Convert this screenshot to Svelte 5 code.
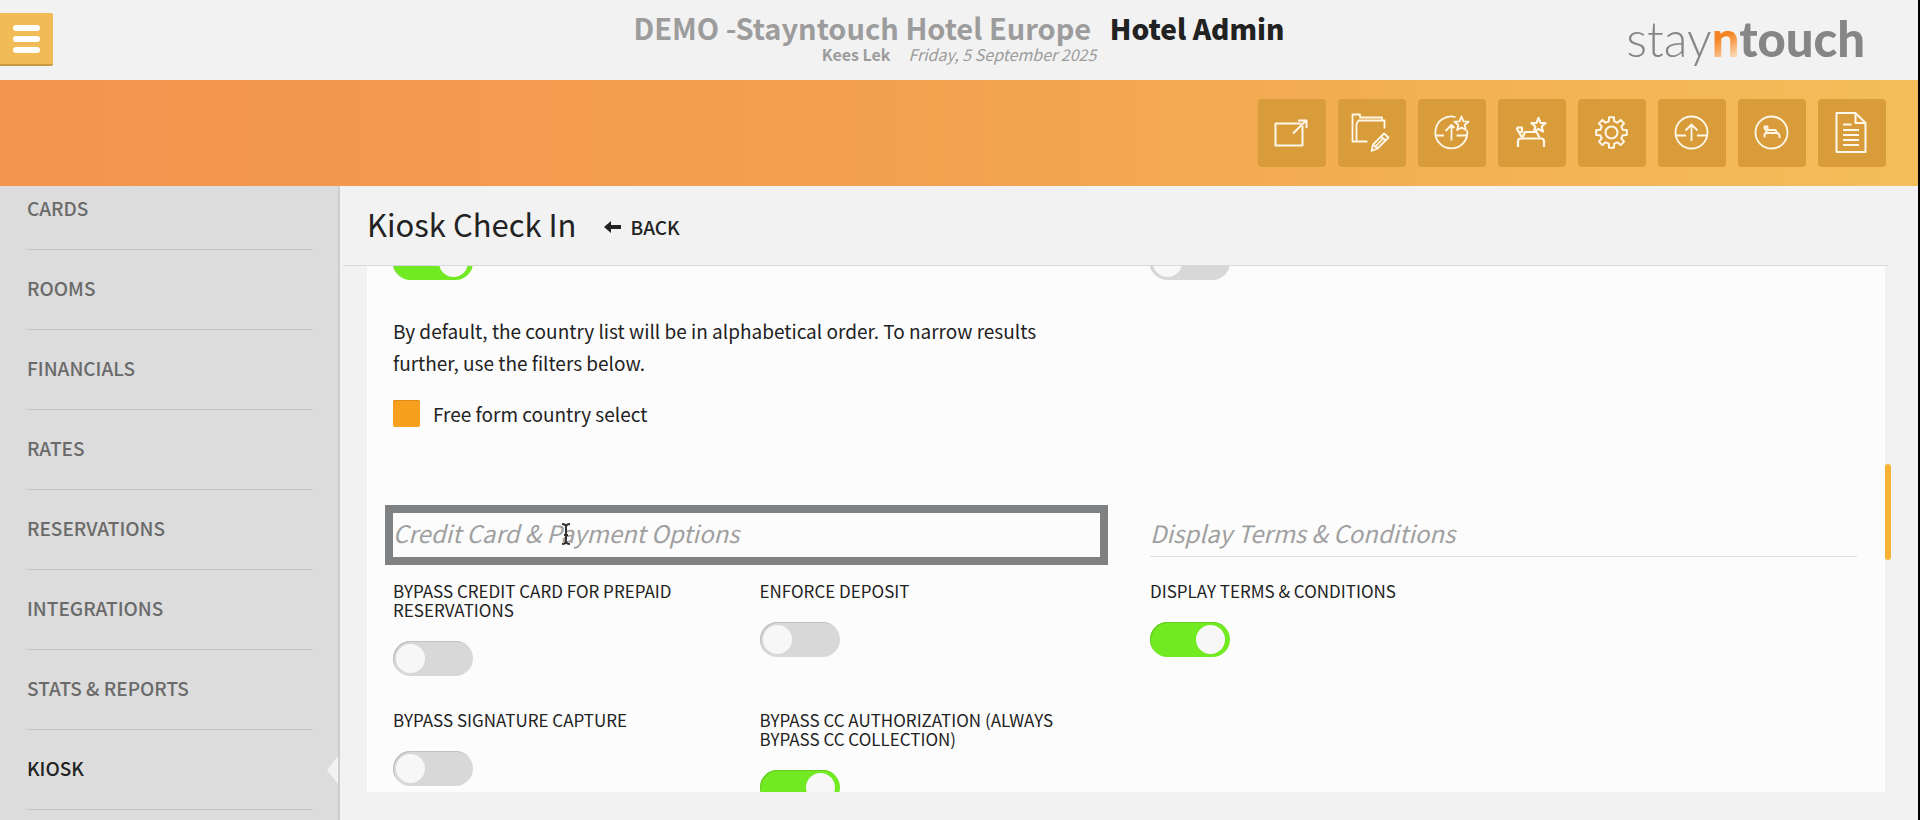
<script lang="ts">
  type MenuItem = { label: string; active?: boolean };

  const menu: MenuItem[] = [
    { label: 'CARDS' },
    { label: 'ROOMS' },
    { label: 'FINANCIALS' },
    { label: 'RATES' },
    { label: 'RESERVATIONS' },
    { label: 'INTEGRATIONS' },
    { label: 'STATS & REPORTS' },
    { label: 'KIOSK', active: true },
  ];

  const star = (cx: number, cy: number, r: number) => {
    let d = '';
    for (let i = 0; i < 10; i++) {
      const a = (Math.PI / 5) * i - Math.PI / 2;
      const rad = i % 2 ? r * 0.45 : r;
      d += `${i ? 'L' : 'M'}${(cx + rad * Math.cos(a)).toFixed(1)} ${(cy + rad * Math.sin(a)).toFixed(1)}`;
    }
    return d + 'Z';
  };

  // eight teeth, four points each
  const gear = (cx: number, cy: number, inner: number, outer: number) => {
    const pts: string[] = [];
    for (let i = 0; i < 8; i++) {
      const mid = (Math.PI / 4) * i;
      for (const [off, rad] of [[-0.24, inner], [-0.16, outer], [0.16, outer], [0.24, inner]]) {
        pts.push(`${(cx + rad * Math.cos(mid + off)).toFixed(1)} ${(cy + rad * Math.sin(mid + off)).toFixed(1)}`);
      }
    }
    return `M${pts.join('L')}Z`;
  };

  const ring = 'M17.5 33.5a16 16 0 1 0 32 0a16 16 0 1 0 -32 0Z';

  const tools = [
    { name: 'Open in new window', width: 2, paths: ['M43 24.5H17.5V46.5H44.5V27', 'M35 34.5L48 21.5', 'M40 21.5H48.5V29'] },
    {
      name: 'Edit folder',
      width: 1.8,
      paths: [
        'M29.5 42.5H14.5V15.5H22V18.5H44V21',
        'M18.5 42V25L20.5 21.5H46.5V29.5',
        'M33.5 52L35 45.5L46 34.5L50.5 38.5L39.5 49.5Z',
        'M35 45.5L39.5 49.5M43 37.5L47.5 41.5M37.5 47.5L45 39.5',
      ],
    },
    {
      name: 'Favourite check in',
      width: 1.8,
      paths: ['M37.5 18A16 16 0 1 0 49.2 31.5', 'M33.5 41.5V26M27.5 32L33.5 26L36.5 29', 'M18 36.5H26M38.5 36.5H49', star(43.5, 25, 7.5)],
    },
    {
      name: 'Favourite room',
      width: 2.2,
      paths: ['M20 48V42.5Q20 39.5 23 39.5H43Q46 39.5 46 42.5V48', 'M24.5 38.5L27 33H38.5L41.5 38.5', 'M18.5 29L24 38.5M19.5 32V28.5H24V33H20', star(40.5, 26.5, 7.5)],
    },
    { name: 'Settings', width: 2, paths: [gear(33.5, 33.5, 11.5, 15.5), 'M27.5 33.5a6 6 0 1 0 12 0a6 6 0 1 0 -12 0Z'] },
    { name: 'Check in', width: 1.8, paths: [ring, 'M33.5 42V25.5M27.5 31.5L33.5 25.5L39.5 31.5', 'M18 36.5H28M39 36.5H49'] },
    { name: 'Rooms', width: 1.8, paths: [ring, 'M26.5 38.5V36.5Q26.5 34 29 34H38.5Q41.5 34 41.5 37V39', 'M26.5 27.5L29 34M26.5 30.5L26.5 27.5H29.5V30.5M29 31H37.5L39 34'] },
    { name: 'Report', width: 2, paths: ['M18.5 14H37.5L47.5 24V53H18.5Z', 'M37.5 14V24H47.5', 'M25 25.5H33.5M25 31H41M25 36H41M25 41H41M25 46H41'] },
  ];

  let countryList = $state(true);
  let passport = $state(false);
  let freeForm = $state(true);
  let showTerms = $state(true);

  let payment = $state([
    { id: 'prepaid', label: 'BYPASS CREDIT CARD FOR PREPAID RESERVATIONS', on: false },
    { id: 'deposit', label: 'ENFORCE DEPOSIT', on: false },
    { id: 'signature', label: 'BYPASS SIGNATURE CAPTURE', on: false },
    { id: 'authorization', label: 'BYPASS CC AUTHORIZATION (ALWAYS BYPASS CC COLLECTION)', on: true },
  ]);
</script>

<div class="app">
  <header class="top">
    <button class="burger" aria-label="Menu"><span></span><span></span><span></span></button>
    <div class="hotel">
      <h1>DEMO -Stayntouch Hotel Europe <strong>Hotel Admin</strong></h1>
      <p><b>Kees Lek</b><i>Friday, 5 September 2025</i></p>
    </div>
    <div class="logo">stay<b><em>n</em>touch</b></div>
  </header>

  <nav class="toolbar" aria-label="Quick actions">
    {#each tools as tool}
      <button aria-label={tool.name}>
        <svg viewBox="0 0 68 68" stroke-width={tool.width}>
          {#each tool.paths as d}<path {d} />{/each}
        </svg>
      </button>
    {/each}
  </nav>

  <div class="body">
    <nav class="sidebar" aria-label="Admin sections">
      <ul>
        {#each menu as item}
          <li class:active={item.active}><a href="#admin">{item.label}</a></li>
        {/each}
      </ul>
    </nav>

    <main>
      <div class="page-head">
        <h2>Kiosk Check In</h2>
        <button class="back">
          <svg viewBox="0 0 18 12"><path d="M0 6L7 0V4H17V8H7V12Z" /></svg>
          BACK
        </button>
      </div>

      <div class="panel">
        <div class="scroller">
          <section class="columns country">
            <div>
              <input type="checkbox" class="switch" aria-label="Country selection" bind:checked={countryList} />
              <p>By default, the country list will be in alphabetical order. To narrow results further, use the filters below.</p>
              <label class="check"><input type="checkbox" bind:checked={freeForm} />Free form country select</label>
            </div>
            <div>
              <input type="checkbox" class="switch" aria-label="Passport entry" bind:checked={passport} />
            </div>
          </section>

          <section class="columns">
            <div>
              <h3 class="focused">
                Credit Card &amp; Payment Options
                <svg class="cursor" viewBox="0 0 10 22"><path d="M1 1Q5 1 5 4Q5 1 9 1M5 4V18M1 21Q5 21 5 18Q5 21 9 21M3 12H7" /></svg>
              </h3>
              <div class="options">
                {#each payment as option (option.id)}
                  <div class="option">
                    <label for={option.id}>{option.label}</label>
                    <input id={option.id} type="checkbox" class="switch" bind:checked={option.on} />
                  </div>
                {/each}
              </div>
            </div>
            <div>
              <h3>Display Terms &amp; Conditions</h3>
              <div class="options">
                <div class="option">
                  <label for="terms">DISPLAY TERMS &amp; CONDITIONS</label>
                  <input id="terms" type="checkbox" class="switch" bind:checked={showTerms} />
                </div>
              </div>
            </div>
          </section>
        </div>
        <div class="thumb"></div>
      </div>
    </main>
  </div>
</div>

<style>
  :global(body) {
    margin: 0;
    background: #000;
  }
  .app {
    display: flex;
    flex-direction: column;
    height: 100vh;
    margin-right: 2px;
    overflow: hidden;
    background: #f2f2f2;
    color: #222;
    font-family: "Source Sans Pro", "Noto Sans CJK SC", sans-serif;
    font-size: 19px;
  }
  h1, h2, h3, p, ul {
    margin: 0;
    padding: 0;
    font-weight: 400;
  }
  button {
    border: 0;
    padding: 0;
    font: inherit;
    color: inherit;
    cursor: pointer;
  }

  .top {
    display: grid;
    grid-template-columns: 1fr auto 1fr;
    flex: none;
    height: 80px;
  }
  .burger {
    display: flex;
    flex-direction: column;
    align-items: center;
    justify-content: center;
    gap: 5px;
    box-sizing: border-box;
    width: 53px;
    height: 53px;
    margin-top: 13px;
    border-bottom: 2px solid #c99a45;
    border-radius: 0 2px 2px 0;
    background: #f1bb56;
  }
  .burger span {
    width: 27px;
    height: 6px;
    border-radius: 3px;
    background: #fff;
  }
  .hotel {
    padding-top: 11px;
    text-align: center;
    color: #9c9c9c;
  }
  .hotel h1 {
    font-size: 29px;
    font-weight: 700;
    line-height: 32px;
  }
  .hotel strong {
    margin-left: 12px;
    font-size: 28px;
    color: #222;
  }
  .hotel p {
    font-size: 16px;
    line-height: 20px;
  }
  .hotel i {
    margin-left: 18px;
  }
  .logo {
    justify-self: end;
    padding: 10px 53px 0 0;
    font-family: Lato, sans-serif;
    font-size: 49px;
    font-weight: 300;
    line-height: 56px;
    color: #868686;
  }
  .logo b {
    font-weight: 900;
  }
  .logo em {
    font-style: normal;
    color: transparent;
    background: linear-gradient(155deg, #f58220 45%, #f8a55c 62%, #fbd3ab 80%);
    background-clip: text;
  }

  .toolbar {
    display: flex;
    align-items: center;
    justify-content: flex-end;
    gap: 12px;
    flex: none;
    height: 106px;
    padding-right: 32px;
    background: linear-gradient(to right, #f3944f, #f3a04e 45%, #f3be5a);
  }
  .toolbar button {
    width: 68px;
    height: 68px;
    border-radius: 4px;
    background: #d99c3b;
  }
  .toolbar svg {
    display: block;
    fill: none;
    stroke: #fff8ea;
    stroke-linejoin: round;
  }

  .body {
    display: flex;
    flex: 1;
    min-height: 0;
  }
  .sidebar {
    box-sizing: border-box;
    flex: none;
    width: 340px;
    overflow: hidden;
    border-right: 2px solid #cecece;
    background: #dcdcdc;
  }
  .sidebar ul {
    margin-top: -16px;
    list-style: none;
  }
  .sidebar li {
    position: relative;
    padding: 0 25px 0 27px;
  }
  .sidebar a {
    display: block;
    padding-bottom: 4px;
    border-bottom: 1px solid #c4c4c4;
    font-weight: 500;
    line-height: 75px;
    color: #6a6a6a;
    text-decoration: none;
  }
  .sidebar .active a {
    color: #222;
  }
  .sidebar .active::after {
    content: "";
    position: absolute;
    top: 26px;
    right: 0;
    width: 11px;
    height: 28px;
    background: #f2f2f2;
    clip-path: polygon(100% 0, 0 50%, 100% 100%);
  }

  main {
    display: flex;
    flex-direction: column;
    flex: 1;
    min-width: 0;
    padding: 0 29px 28px 3px;
  }
  .page-head {
    display: flex;
    align-items: center;
    gap: 27px;
    flex: none;
    box-sizing: border-box;
    height: 80px;
    padding: 0 0 3px 24px;
    border-bottom: 1px solid #dadada;
  }
  .page-head h2 {
    font-size: 31px;
    line-height: 40px;
  }
  .back {
    display: flex;
    align-items: center;
    gap: 9px;
    padding-top: 6px;
    background: none;
    font-weight: 500;
    line-height: 24px;
  }
  .back svg {
    width: 18px;
    height: 12px;
    fill: #222;
  }

  .panel {
    position: relative;
    flex: 1;
    min-height: 0;
    margin: 0 4px 0 24px;
    background: #fcfcfc;
  }
  .scroller {
    height: 100%;
    overflow: hidden;
  }
  .thumb {
    position: absolute;
    top: 198px;
    right: -6px;
    width: 6px;
    height: 96px;
    border-radius: 3px;
    background: #f9b233;
  }
  .columns {
    display: grid;
    grid-template-columns: 1fr 1fr;
    gap: 50px;
    padding: 0 28px 0 26px;
  }
  .country {
    margin: -21px 0 86px;
  }
  .country p {
    margin: 35px 0 21px;
    line-height: 32px;
  }
  .check {
    display: flex;
    align-items: center;
    gap: 13px;
    line-height: 27px;
  }
  .check input {
    appearance: none;
    width: 27px;
    height: 27px;
    margin: 0;
    border-radius: 2px;
    background: #ddd;
  }
  .check input:checked {
    background: #f7a01d;
    box-shadow: inset 0 1px 1px #d98a12;
  }

  h3 {
    position: relative;
    padding-bottom: 3px;
    border-bottom: 1px solid #e0e0e0;
    font-size: 24px;
    font-style: italic;
    line-height: 40px;
    color: #a0a0a0;
  }
  .focused {
    border-color: transparent;
    outline: 8px solid #808182;
  }
  .cursor {
    position: absolute;
    top: 10px;
    left: 168px;
    width: 10px;
    height: 22px;
    fill: none;
    stroke: #333;
    stroke-width: 2;
  }
  .options {
    display: grid;
    grid-template-columns: 1fr 1fr;
    gap: 34px 26px;
    padding-top: 24px;
  }
  .option {
    display: flex;
    flex-direction: column;
    gap: 22px;
    font-size: 17px;
    line-height: 19px;
  }
  .option label {
    max-width: 300px;
  }
  .switch {
    appearance: none;
    display: block;
    box-sizing: border-box;
    width: 80px;
    height: 35px;
    margin: 0;
    padding: 3px;
    border-radius: 18px;
    background: #d8d8d8;
    box-shadow: inset 1px 1px 0 #c0c0c0;
  }
  .switch::before {
    content: "";
    display: block;
    width: 29px;
    height: 29px;
    border-radius: 50%;
    background: #f7f7f7;
  }
  .switch:checked {
    padding-right: 5px;
    background: #72ea22;
    box-shadow: inset 1px 1px 0 #67cc24;
  }
  .switch:checked::before {
    margin-left: auto;
  }
</style>
